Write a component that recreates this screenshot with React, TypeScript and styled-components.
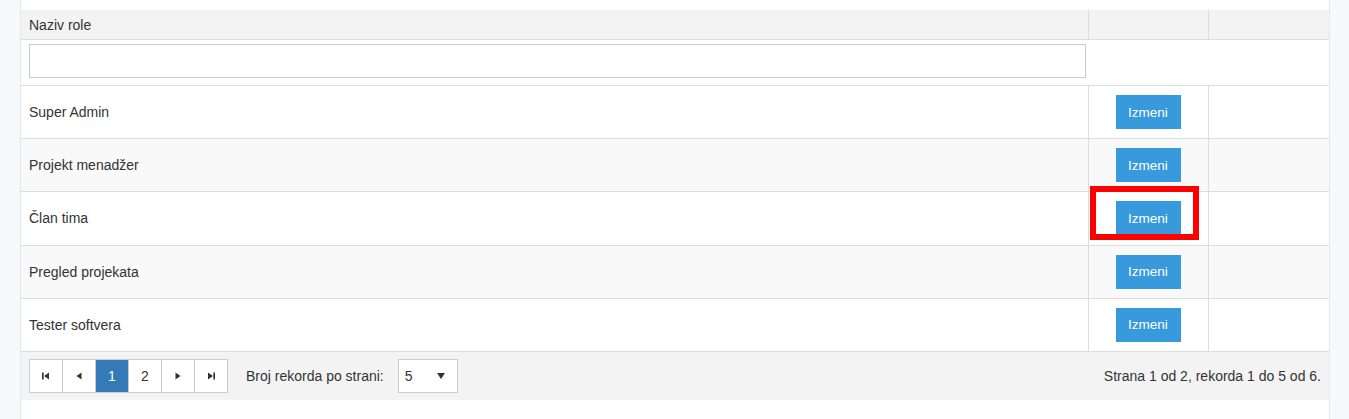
import React from 'react';
import styled, {createGlobalStyle} from 'styled-components';

const GlobalStyle = createGlobalStyle`
  body {
    margin: 0;
    background-color: #f8f9fa;
    font-family: 'Liberation Sans', Arial, sans-serif;
    color: #333;
  }
`;

const Page = styled.div`
  display: flex;
  height: 419px;
`;

const Panel = styled.div`
  margin-left: 20px;
  width: 1308px;
  background-color: #fff;
  border-left: 1px solid #e3e8ef;
  border-right: 1px solid #e3e8ef;
  padding-top: 10px;
`;

const Table = styled.table`
  width: 100%;
  border-collapse: collapse;
  table-layout: fixed;
  font-size: 14px;
`;

const HeadCell = styled.th<{last?: boolean}>`
  height: 29px;
  padding: 0 8px;
  background-color: #f3f3f3;
  border-bottom: 1px solid #ddd;
  border-right: ${props => (props.last ? 'none' : '1px solid #ddd')};
  font-size: 14px;
  font-weight: normal;
  text-align: left;
`;

const FilterCell = styled.td`
  padding: 4px 2px 7px 8px;
  border-bottom: 1px solid #ddd;
`;

const FilterInput = styled.input`
  display: block;
  box-sizing: border-box;
  width: 100%;
  height: 34px;
  border: 1px solid #ccc;
  outline: none;
`;

const Row = styled.tr<{striped?: boolean}>`
  background-color: ${props => (props.striped ? '#f9f9f9' : '#fff')};
`;

const Cell = styled.td<{last?: boolean}>`
  position: relative;
  height: 52.2px;
  padding: 0 8px;
  border-bottom: 1px solid #ddd;
  border-right: ${props => (props.last ? 'none' : '1px solid #ddd')};
`;

const ActionCell = styled(Cell)`
  text-align: center;
`;

const EditButton = styled.button`
  width: 65px;
  height: 34px;
  border: none;
  background-color: #3899dd;
  color: #fff;
  font-family: 'Liberation Sans', Arial, sans-serif;
  font-size: 13.5px;
  cursor: pointer;
`;

const Highlight = styled.div`
  position: absolute;
  left: 1px;
  top: -6px;
  width: 109px;
  height: 54px;
  box-sizing: border-box;
  border: 6px solid #ff0000;
  pointer-events: none;
`;

const Footer = styled.div`
  display: flex;
  align-items: center;
  height: 48px;
  padding: 0 8px;
  background-color: #f3f3f3;
  font-size: 14px;
`;

const Pager = styled.div`
  display: flex;
`;

const PageButton = styled.button<{active?: boolean}>`
  width: 34px;
  height: 34px;
  margin-left: -1px;
  display: flex;
  align-items: center;
  justify-content: center;
  padding: 0;
  border: 1px solid #ccc;
  background-color: ${props => (props.active ? '#337ab7' : '#fff')};
  color: ${props => (props.active ? '#fff' : '#333')};
  font-family: 'Liberation Sans', Arial, sans-serif;
  font-size: 14px;
  &:first-child {
    margin-left: 0;
  }
`;

const PerPageLabel = styled.span`
  margin-left: 18px;
`;

const PerPageSelect = styled.div`
  margin-left: 14px;
  width: 60px;
  height: 34px;
  box-sizing: border-box;
  border: 1px solid #ccc;
  background-color: #fff;
  display: flex;
  align-items: center;
  justify-content: space-between;
  padding: 0 12px 0 6px;
`;

const Summary = styled.span`
  margin-left: auto;
`;

const PagerIcon = ({kind}: {kind: 'first' | 'prev' | 'next' | 'last'}) => {
  const flip = kind === 'next' || kind === 'last';
  const withBar = kind === 'first' || kind === 'last';
  return (
    <svg width="8" height="8" viewBox="0 0 8 8" style={{transform: flip ? 'scaleX(-1)' : undefined}}>
      {withBar && <rect x="0" y="0.5" width="1.6" height="7" fill="#333" />}
      <polygon points={withBar ? '2,4 7,0.5 7,7.5' : '1.5,4 6.5,0.5 6.5,7.5'} fill="#333" />
    </svg>
  );
};

const roles = ['Super Admin', 'Projekt menadžer', 'Član tima', 'Pregled projekata', 'Tester softvera'];

const App = () => {
  return (
    <>
      <GlobalStyle />
      <Page>
        <Panel>
          <Table>
            <colgroup>
              <col />
              <col style={{width: 120}} />
              <col style={{width: 121}} />
            </colgroup>
            <thead>
              <tr>
                <HeadCell>Naziv role</HeadCell>
                <HeadCell />
                <HeadCell last />
              </tr>
              <tr>
                <FilterCell>
                  <FilterInput type="text" />
                </FilterCell>
                <FilterCell />
                <FilterCell />
              </tr>
            </thead>
            <tbody>
              {roles.map((role, i) => (
                <Row key={role} striped={i % 2 === 1}>
                  <Cell>{role}</Cell>
                  <ActionCell>
                    <EditButton>Izmeni</EditButton>
                    {role === 'Član tima' && <Highlight />}
                  </ActionCell>
                  <Cell last />
                </Row>
              ))}
            </tbody>
          </Table>
          <Footer>
            <Pager>
              <PageButton>
                <PagerIcon kind="first" />
              </PageButton>
              <PageButton>
                <PagerIcon kind="prev" />
              </PageButton>
              <PageButton active>1</PageButton>
              <PageButton>2</PageButton>
              <PageButton>
                <PagerIcon kind="next" />
              </PageButton>
              <PageButton>
                <PagerIcon kind="last" />
              </PageButton>
            </Pager>
            <PerPageLabel>Broj rekorda po strani:</PerPageLabel>
            <PerPageSelect>
              <span>5</span>
              <svg width="8" height="6" viewBox="0 0 8 6">
                <polygon points="0,0 8,0 4,6" fill="#333" />
              </svg>
            </PerPageSelect>
            <Summary>Strana 1 od 2, rekorda 1 do 5 od 6.</Summary>
          </Footer>
        </Panel>
      </Page>
    </>
  );
};

export default App;
